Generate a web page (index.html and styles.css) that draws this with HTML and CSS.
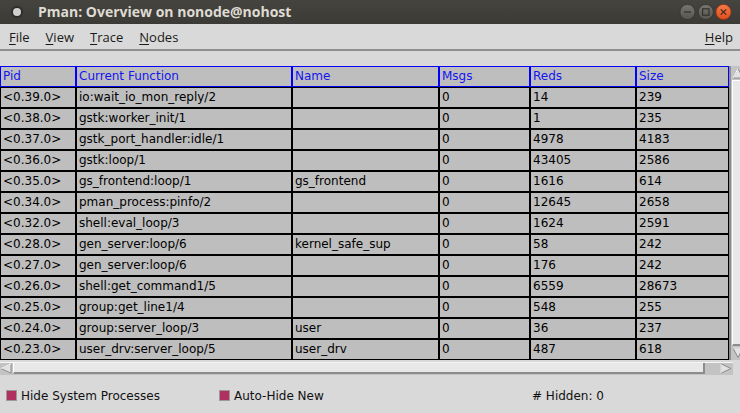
FILE: index.html
```html
<!DOCTYPE html>
<html>
<head>
<meta charset="utf-8">
<title>Pman</title>
<link rel="stylesheet" href="styles.css">
</head>
<body>
<div class="window">
  <div class="titlebar">
    <svg class="app-icon" width="14" height="14" viewBox="0 0 14 14"><circle cx="7" cy="7" r="6" fill="#2e2d2a"/><circle cx="7" cy="7" r="4" fill="#cfcfcf"/></svg>
    <span class="title">Pman: Overview on nonode@nohost</span>
    <svg class="win-buttons" width="56" height="18" viewBox="0 0 56 18">
      <defs>
        <linearGradient id="gb" x1="0" y1="0" x2="0" y2="1"><stop offset="0" stop-color="#77766f"/><stop offset="1" stop-color="#55544f"/></linearGradient>
        <linearGradient id="go" x1="0" y1="0" x2="0" y2="1"><stop offset="0" stop-color="#f57a4a"/><stop offset="1" stop-color="#df4d1c"/></linearGradient>
      </defs>
      <circle cx="8.5" cy="9" r="7.6" fill="url(#gb)" stroke="#34332f" stroke-width="0.8"/>
      <line x1="5" y1="9" x2="12" y2="9" stroke="#33322e" stroke-width="1.3"/>
      <circle cx="26.8" cy="9" r="7.6" fill="url(#gb)" stroke="#34332f" stroke-width="0.8"/>
      <rect x="23.6" y="5.8" width="6.4" height="6.4" fill="none" stroke="#33322e" stroke-width="1.2"/>
      <circle cx="44.5" cy="9" r="7.6" fill="url(#go)" stroke="#8e3414" stroke-width="0.8"/>
      <path d="M41.8 6.3 L47.2 11.7 M47.2 6.3 L41.8 11.7" stroke="#3a2a22" stroke-width="1.2"/>
    </svg>
  </div>
  <div class="menubar">
    <span class="menu"><u>F</u>ile</span>
    <span class="menu"><u>V</u>iew</span>
    <span class="menu"><u>T</u>race</span>
    <span class="menu"><u>N</u>odes</span>
    <span class="menu help"><u>H</u>elp</span>
  </div>
  <div class="content">
    <div class="grid-area">
      <div class="grid">
        <div class="hd">Pid</div><div class="hd">Current Function</div><div class="hd">Name</div><div class="hd">Msgs</div><div class="hd">Reds</div><div class="hd">Size</div>
        <div class="c">&lt;0.39.0&gt;</div><div class="c">io:wait_io_mon_reply/2</div><div class="c"></div><div class="c">0</div><div class="c">14</div><div class="c">239</div>
        <div class="c">&lt;0.38.0&gt;</div><div class="c">gstk:worker_init/1</div><div class="c"></div><div class="c">0</div><div class="c">1</div><div class="c">235</div>
        <div class="c">&lt;0.37.0&gt;</div><div class="c">gstk_port_handler:idle/1</div><div class="c"></div><div class="c">0</div><div class="c">4978</div><div class="c">4183</div>
        <div class="c">&lt;0.36.0&gt;</div><div class="c">gstk:loop/1</div><div class="c"></div><div class="c">0</div><div class="c">43405</div><div class="c">2586</div>
        <div class="c">&lt;0.35.0&gt;</div><div class="c">gs_frontend:loop/1</div><div class="c">gs_frontend</div><div class="c">0</div><div class="c">1616</div><div class="c">614</div>
        <div class="c">&lt;0.34.0&gt;</div><div class="c">pman_process:pinfo/2</div><div class="c"></div><div class="c">0</div><div class="c">12645</div><div class="c">2658</div>
        <div class="c">&lt;0.32.0&gt;</div><div class="c">shell:eval_loop/3</div><div class="c"></div><div class="c">0</div><div class="c">1624</div><div class="c">2591</div>
        <div class="c">&lt;0.28.0&gt;</div><div class="c">gen_server:loop/6</div><div class="c">kernel_safe_sup</div><div class="c">0</div><div class="c">58</div><div class="c">242</div>
        <div class="c">&lt;0.27.0&gt;</div><div class="c">gen_server:loop/6</div><div class="c"></div><div class="c">0</div><div class="c">176</div><div class="c">242</div>
        <div class="c">&lt;0.26.0&gt;</div><div class="c">shell:get_command1/5</div><div class="c"></div><div class="c">0</div><div class="c">6559</div><div class="c">28673</div>
        <div class="c">&lt;0.25.0&gt;</div><div class="c">group:get_line1/4</div><div class="c"></div><div class="c">0</div><div class="c">548</div><div class="c">255</div>
        <div class="c">&lt;0.24.0&gt;</div><div class="c">group:server_loop/3</div><div class="c">user</div><div class="c">0</div><div class="c">36</div><div class="c">237</div>
        <div class="c">&lt;0.23.0&gt;</div><div class="c">user_drv:server_loop/5</div><div class="c">user_drv</div><div class="c">0</div><div class="c">487</div><div class="c">618</div>
      </div>
      <div class="vscroll">
        <svg class="arrow" width="12" height="12" viewBox="0 0 12 12"><polygon points="6,1.5 11,11 1,11" fill="#e2e2e2" stroke="#8c8c8c" stroke-width="1"/><path d="M6 1.5 L1 11" stroke="#ffffff" stroke-width="1"/></svg>
        <div class="vthumb"></div>
        <svg class="arrow" width="12" height="12" viewBox="0 0 12 12"><polygon points="1,1 11,1 6,10.5" fill="#e2e2e2" stroke="#8c8c8c" stroke-width="1"/><path d="M1 1 L11 1" stroke="#ffffff" stroke-width="1"/></svg>
      </div>
    </div>
    <div class="hscroll">
      <svg class="arrow" width="12" height="11" viewBox="0 0 12 11"><polygon points="1,5.5 11,0.8 11,10.2" fill="#e2e2e2" stroke="#8c8c8c" stroke-width="1"/><path d="M1 5.5 L11 0.8" stroke="#ffffff" stroke-width="1"/></svg>
      <div class="hthumb"></div>
      <div class="htrough"></div>
      <svg class="arrow" width="12" height="11" viewBox="0 0 12 11"><polygon points="11,5.5 1,0.8 1,10.2" fill="#e2e2e2" stroke="#8c8c8c" stroke-width="1"/><path d="M1 0.8 L1 10.2" stroke="#ffffff" stroke-width="1"/></svg>
    </div>
  </div>
  <div class="footer">
    <label class="check first"><span class="box"></span>Hide System Processes</label>
    <label class="check second"><span class="box"></span>Auto-Hide New</label>
    <span class="hidden">#&nbsp;Hidden: 0</span>
  </div>
</div>
</body>
</html>
```
FILE: styles.css
```css
html, body {
  margin: 0;
  padding: 0;
}
body {
  width: 740px;
  height: 413px;
  overflow: hidden;
  background: #d9d9d9;
}
.window {
  width: 740px;
  height: 413px;
  display: flex;
  flex-direction: column;
  overflow: hidden;
}
.titlebar {
  height: 24px;
  flex: none;
  display: flex;
  align-items: center;
  background: linear-gradient(to bottom, #45443f, #3b3a36);
  padding-left: 10px;
  box-sizing: border-box;
}
.app-icon {
  flex: none;
}
.title {
  margin-left: 14px;
  font-family: "Open Sans", "DejaVu Sans", sans-serif;
  font-weight: 700;
  font-size: 14px;
  color: #dfdbd2;
  line-height: 24px;
}
.win-buttons {
  margin-left: auto;
  margin-right: 5px;
  flex: none;
}
.menubar {
  height: 24px;
  flex: none;
  display: flex;
  align-items: center;
  border-bottom: 2px solid #8e8e8e;
  padding-left: 9px;
  padding-right: 7px;
  padding-top: 1px;
  box-sizing: content-box;
  gap: 16px;
  font-family: "Open Sans", "DejaVu Sans", sans-serif;
  font-size: 13px;
  color: #1a1a1a;
}
.menu u {
  text-underline-offset: 2px;
}
.menu.help {
  margin-left: auto;
}
.content {
  padding-top: 15px;
  flex: none;
}
.grid-area {
  display: flex;
  height: 294px;
}
.grid {
  display: grid;
  grid-template-columns: 76px 216px 147px 91px 106px 93px;
  grid-auto-rows: 21px;
  width: 729px;
  flex: none;
  font-family: "DejaVu Sans", sans-serif;
  font-size: 12px;
}
.hd, .c {
  box-sizing: border-box;
  background: #bebebe;
  padding-left: 2px;
  line-height: 19px;
  white-space: nowrap;
  overflow: hidden;
}
.hd {
  border: 1px solid #0000ff;
  color: #1515f0;
}
.c {
  border: 1px solid #000000;
  color: #000000;
}
.vscroll {
  width: 14px;
  flex: none;
  box-sizing: border-box;
  border-left: 2px solid #8c8c8c;
  background: #c3c3c3;
  display: flex;
  flex-direction: column;
  padding: 1px 0 1px 1px;
}
.arrow {
  flex: none;
  display: block;
}
.vthumb {
  flex: 1;
  margin: 1px 0;
  box-sizing: border-box;
  border-top: 1px solid #ffffff;
  border-left: 1px solid #ffffff;
  border-bottom: 2px solid #8c8c8c;
  background: #e8e8e8;
}
.hscroll {
  margin-top: 2px;
  width: 733px;
  height: 13px;
  box-sizing: border-box;
  background: #c3c3c3;
  border-top: 1px solid #f4f4f4;
  display: flex;
  align-items: stretch;
  padding: 0 1px 1px 0;
}
.hthumb {
  width: 692px;
  flex: none;
  margin-left: 1px;
  box-sizing: border-box;
  border-left: 1px solid #ffffff;
  border-bottom: 2px solid #8c8c8c;
  border-right: 2px solid #8c8c8c;
  background: #e8e8e8;
}
.htrough {
  flex: 1;
}
.footer {
  flex: none;
  height: 38px;
  box-sizing: border-box;
  padding-top: 3px;
  padding-left: 6px;
  display: flex;
  align-items: center;
  font-family: "DejaVu Sans", sans-serif;
  font-size: 12px;
  color: #111111;
}
.check {
  display: flex;
  align-items: center;
}
.check.first {
  width: 213px;
}
.check.second {
  width: 313px;
}
.box {
  width: 11px;
  height: 11px;
  box-sizing: border-box;
  border: 1px solid #9a9a9a;
  background: #b03060;
  margin-right: 4px;
  flex: none;
}
.hidden {
  white-space: nowrap;
}
```
